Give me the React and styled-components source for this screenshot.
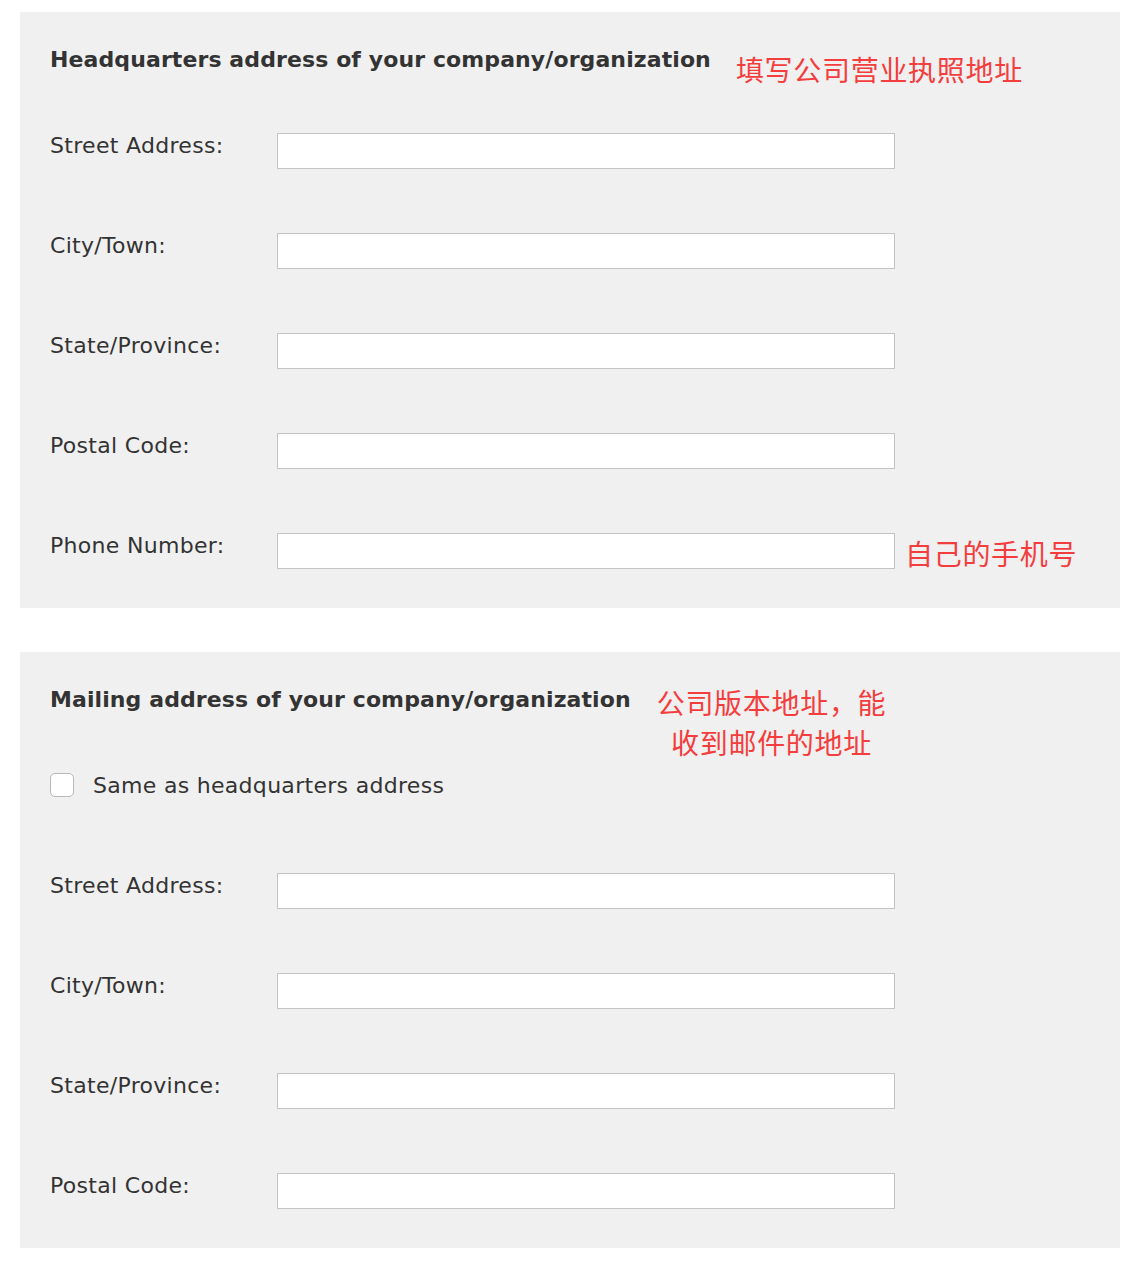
import React from "react";
import styled, { createGlobalStyle } from "styled-components";

const Global = createGlobalStyle`
  body {
    margin: 0;
    background: #ffffff;
    font-family: "DejaVu Sans", "Noto Sans", sans-serif;
  }
`;

const Page = styled.div`
  padding: 12px 12px 20px 20px;
  display: flex;
  flex-direction: column;
  gap: 44px;
`;

const Panel = styled.section`
  width: 1100px;
  box-sizing: border-box;
  background: #f0f0f0;
  padding: 30px 30px 39px 30px;
`;

const HeadingRow = styled.div`
  display: flex;
  align-items: flex-start;
  height: 36px;
  gap: ${(p) => p.$gap || 26}px;
`;

const Heading = styled.h3`
  margin: 0;
  font-size: 22px;
  line-height: 36px;
  font-weight: bold;
  letter-spacing: 0.1px;
  color: #333333;
  white-space: nowrap;
`;

const Note = styled.div`
  font-family: "Noto Sans CJK SC", sans-serif;
  font-size: 28px;
  line-height: 40px;
  letter-spacing: 0.7px;
  color: #f43d3d;
  white-space: nowrap;
  text-align: center;
  margin-top: ${(p) => p.$top || 0}px;
`;

const Rows = styled.div`
  display: flex;
  flex-direction: column;
  gap: 64px;
  margin-top: ${(p) => p.$top}px;
`;

const Row = styled.div`
  display: flex;
  align-items: center;
  height: 36px;
`;

const Label = styled.label`
  width: 227px;
  flex: none;
  font-size: 22px;
  letter-spacing: 0.3px;
  color: #333333;
  margin-top: -12px;
`;

const Field = styled.input`
  width: 618px;
  height: 36px;
  box-sizing: border-box;
  border: 1px solid #c4c4c4;
  background: #ffffff;
  margin: 0;
  padding: 0 8px;
  flex: none;
`;

const RowNote = styled(Note)`
  margin-left: 10px;
  margin-top: 4px;
`;

const CheckRow = styled.label`
  display: flex;
  align-items: center;
  height: 36px;
  margin-top: 49px;
  gap: 19px;
  font-size: 22px;
  letter-spacing: 0.3px;
  color: #333333;
`;

const Box = styled.input`
  appearance: none;
  width: 24px;
  height: 24px;
  margin: 0;
  border: 1px solid #b8b8b8;
  border-radius: 5px;
  background: #ffffff;
  box-sizing: border-box;
`;

const hqFields = ["Street Address:", "City/Town:", "State/Province:", "Postal Code:"];

export default function App() {
  return (
    <Page>
      <Global />
      <Panel>
        <HeadingRow $gap={25}>
          <Heading>Headquarters address of your company/organization</Heading>
          <Note $top={7}>填写公司营业执照地址</Note>
        </HeadingRow>
        <Rows $top={55}>
          {hqFields.map((f) => (
            <Row key={f}>
              <Label>{f}</Label>
              <Field type="text" />
            </Row>
          ))}
          <Row>
            <Label>Phone Number:</Label>
            <Field type="text" />
            <RowNote>自己的手机号</RowNote>
          </Row>
        </Rows>
      </Panel>
      <Panel>
        <HeadingRow $gap={26}>
          <Heading>Mailing address of your company/organization</Heading>
          <Note $top={0}>
            公司版本地址，能
            <br />
            收到邮件的地址
          </Note>
        </HeadingRow>
        <CheckRow>
          <Box type="checkbox" />
          Same as headquarters address
        </CheckRow>
        <Rows $top={70}>
          {hqFields.map((f) => (
            <Row key={f}>
              <Label>{f}</Label>
              <Field type="text" />
            </Row>
          ))}
        </Rows>
      </Panel>
    </Page>
  );
}
